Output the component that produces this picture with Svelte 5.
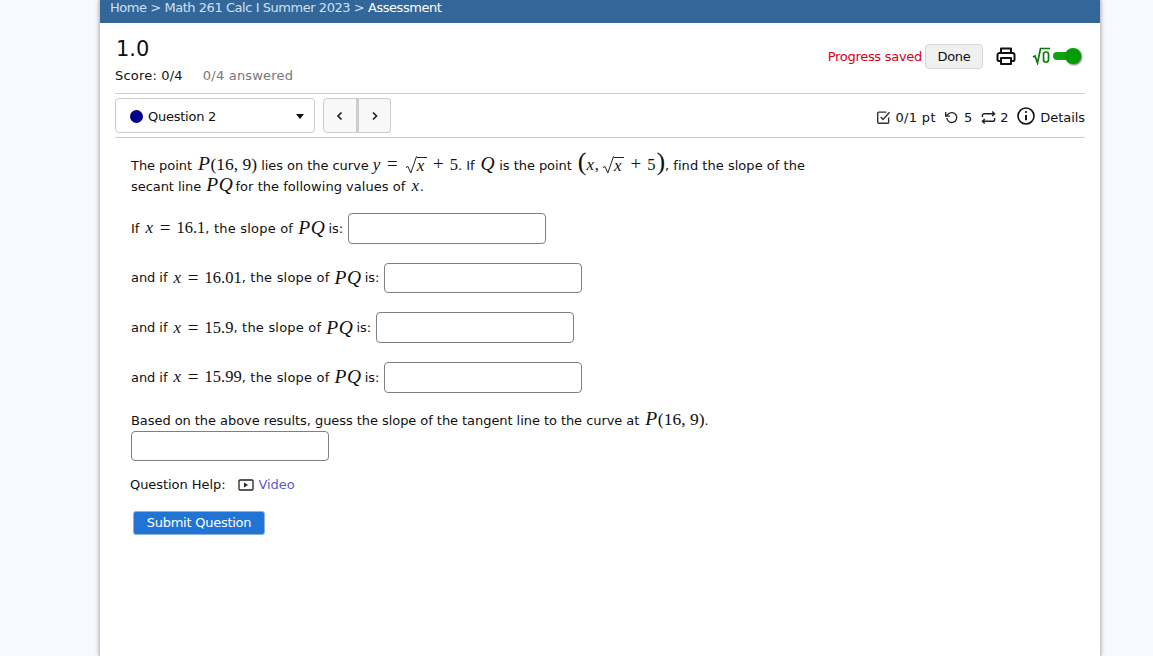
<script>
  const rows = [
    { lead: 'and if', val: '16.01' },
    { lead: 'and if', val: '15.9' },
    { lead: 'and if', val: '15.99' }
  ];
</script>

{#snippet sqrtx()}<span class="sqrt"><svg class="rad" viewBox="0 0 12 18" width="12" height="18" fill="none" stroke="#222"><path d="M1 11.500l2-1 2.800 6.500L11.500 .500h.5" stroke-width="1"/></svg><span class="vinc"><span class="mi">x</span></span></span>{/snippet}

<div class="page">
  <div class="card">
    <nav class="crumbs">Home &gt; Math 261 Calc I Summer 2023 &gt; <span class="cur">Assessment</span></nav>
    <div class="body">
      <header class="top">
        <div>
          <h1>1.0</h1>
          <div class="score"><span>Score: 0/4</span><span class="ans">0/4 answered</span></div>
        </div>
        <div class="tools">
          <span class="saved">Progress saved</span>
          <button class="done">Done</button>
          <svg class="print" viewBox="0 0 20 20" width="20" height="20" fill="none" stroke="#111" stroke-width="2" stroke-linejoin="round"><path d="M5 7V2.500h10V7"/><path d="M5 15H3a1.500 1.500 0 0 1-1.500-1.500V9A2 2 0 0 1 3.500 7h13a2 2 0 0 1 2 2v4.500A1.500 1.500 0 0 1 17 15h-2"/><rect x="5" y="12" width="10" height="6"/></svg>
          <span class="mathtoggle"><svg viewBox="0 0 19 18" width="19" height="18" fill="none" stroke="#0a7a0a" stroke-width="1.700"><path d="M1 10l2-1 2.500 7L8.500 1.500H18"/><rect x="11.500" y="5" width="5" height="10" rx="2.300"/></svg>
            <span class="switch"><span class="knob"></span></span></span>
        </div>
      </header>
      <div class="qbar">
        <div class="left">
          <div class="select"><span class="dot"></span><span class="qname">Question 2</span><span class="caret"></span></div>
          <div class="pager">
            <button aria-label="Previous"><svg viewBox="0 0 10 10" width="10" height="10" fill="none" stroke="#222" stroke-width="1.700"><path d="M6.500 1.500L3 5l3.500 3.500"/></svg></button>
            <button aria-label="Next"><svg viewBox="0 0 10 10" width="10" height="10" fill="none" stroke="#222" stroke-width="1.700"><path d="M3 1.500L6.500 5 3 8.500"/></svg></button>
          </div>
        </div>
        <div class="meta">
          <svg viewBox="0 0 16 16" width="15" height="15" fill="none" stroke="#333" stroke-width="1.500"><path d="M13.500 8v5a1.200 1.200 0 0 1-1.200 1.200H3A1.200 1.200 0 0 1 1.800 13V3.500A1.200 1.200 0 0 1 3 2.300h8"/><path d="M5 7.500l2.500 2.500L14.500 2.500"/></svg>
          <span class="m1">0/1 pt</span>
          <svg viewBox="0 0 16 16" width="15" height="15" fill="none" stroke="#222" stroke-width="1.400"><path d="M3 8.500a5.300 5.300 0 1 0 1.500-4.200L2 6.300"/><path d="M1.800 2v4.500h4.500"/></svg>
          <span class="m2">5</span>
          <svg viewBox="0 0 16 16" width="15" height="15" fill="none" stroke="#222" stroke-width="1.500"><path d="M1.500 7.500V6a2 2 0 0 1 2-2h11M12 1.500L14.500 4 12 6.500"/><path d="M14.500 8.500V10a2 2 0 0 1-2 2h-11M4 9.500L1.500 12 4 14.500"/></svg>
          <span class="m3">2</span>
          <svg class="info" viewBox="0 0 18 18" width="18" height="18" fill="none" stroke="#111" stroke-width="1.600"><circle cx="9" cy="9" r="8"/><path d="M9 8v5.200" stroke-width="2"/><circle cx="9" cy="5" r="1.100" fill="#111" stroke="none"/></svg>
          <span class="details">Details</span>
        </div>
      </div>

      <section class="question">
        <p class="intro">The point <span class="mi big">P</span><span class="mn big">(16, 9)</span> lies on the curve <span class="mi">y</span><span class="op">=</span>{@render sqrtx()}<span class="op">+</span><span class="mn">5</span>. If <span class="mi big">Q</span> is the point <span class="paren open">(</span><span class="mi">x</span><span class="mn cm">,</span> {@render sqrtx()}<span class="op">+</span><span class="mn">5</span><span class="paren close">)</span><span class="tail2">, find the slope of the</span><br />secant line <span class="mi big pq2">PQ</span> <span class="tail2">for the following values of</span> <span class="mi lone">x</span>.</p>

        <div class="row r0">If <span class="mi lone">x</span><span class="op">=</span><span class="mn">16.1</span><span class="tail">, the slope of </span><span class="mi big pq">PQ</span> is: <input aria-label="slope 1" /></div>
        {#each rows as r}
          <div class="row">{r.lead} <span class="mi lone">x</span><span class="op">=</span><span class="mn">{r.val}</span><span class="tail">, the slope of </span><span class="mi big pq">PQ</span> is: <input aria-label="slope" /></div>
        {/each}

        <p class="guess">Based on the above results, guess the slope of the tangent line to the curve at <span class="mi big">P</span><span class="mn big">(16, 9)</span>.</p>
        <input class="last" aria-label="tangent slope" />

        <div class="help">
          <span>Question Help:</span>
          <svg viewBox="0 0 16 12" width="16" height="12" fill="none" stroke="#222" stroke-width="1.300"><rect x="1" y="1" width="14" height="10" rx="1"/><path d="M6 3.500l4 2.500-4 2.500z" fill="#222" stroke="none"/></svg>
          <a href="#video">Video</a>
        </div>
        <button class="submit">Submit Question</button>
      </section>
    </div>
  </div>
</div>

<style>
  :global(body) { margin: 0; background: #f8f8ff; }
  .page {
    height: 656px;
    overflow: hidden;
    font-family: "DejaVu Sans", Tahoma, sans-serif;
    font-size: 13px;
    letter-spacing: -0.06px;
    color: #111;
  }
  .card {
    width: 1000px;
    margin-left: 100px;
    height: 656px;
    background: #fff;
    box-shadow: 0 0 4px 1px #a8a8a8;
  }
  .crumbs {
    height: 23px;
    box-sizing: border-box;
    padding-left: 10px;
    background: #336699;
    color: #cfe0f2;
    line-height: 15px;
    letter-spacing: -0.45px;
  }
  .cur { color: #fff; }
  .body { padding: 0 15px; }
  .top {
    height: 70px;
    display: flex;
    justify-content: space-between;
    border-bottom: 1px solid #ccc;
  }
  h1 {
    margin: 13px 0 0 1px;
    font-size: 21px;
    font-weight: 400;
    line-height: 26px;
    letter-spacing: 0;
  }
  .score { margin-top: 5px; line-height: 18px; display: flex; gap: 20px; letter-spacing: 0.2px; }
  .ans { color: #777; }
  .tools { display: flex; align-items: center; height: 26px; margin-top: 20px; }
  .saved { color: #d4001c; margin-right: 3px; letter-spacing: -0.28px; }
  .done {
    width: 58px;
    height: 25px;
    padding: 0;
    font: inherit;
    letter-spacing: -0.35px;
    color: #111;
    background: #f0f0f0;
    border: 1px solid #d6d6d6;
    border-radius: 4px;
  }
  .print { margin-left: 13px; }
  .mathtoggle { display: flex; align-items: center; margin-left: 16px; margin-right: 4px; }
  .switch {
    position: relative;
    display: block;
    width: 28px;
    height: 8px;
    margin-left: 2px;
    background: #0fa30f;
    border-radius: 4px;
  }
  .knob {
    position: absolute;
    right: 0;
    top: -4px;
    width: 16px;
    height: 16px;
    border-radius: 50%;
    background: #049c04;
    box-shadow: 1px 1px 2px #666;
  }
  .qbar {
    height: 43px;
    display: flex;
    align-items: center;
    justify-content: space-between;
    border-bottom: 1px solid #ccc;
  }
  .left { display: flex; gap: 8px; }
  .select {
    width: 200px;
    height: 35px;
    box-sizing: border-box;
    display: flex;
    align-items: center;
    padding: 1px 10px 0 14px;
    letter-spacing: -0.25px;
    border: 1px solid #ccc;
    border-radius: 4px;
  }
  .dot { width: 13px; height: 13px; border-radius: 50%; background: #00008b; margin-right: 5px; }
  .qname { flex: 1; }
  .caret {
    width: 0;
    height: 0;
    border-left: 4px solid transparent;
    border-right: 4px solid transparent;
    border-top: 5px solid #111;
  }
  .pager { display: flex; }
  .pager button {
    width: 34px;
    height: 35px;
    padding: 0;
    display: flex;
    align-items: center;
    justify-content: center;
    background: #f8f8f8;
    border: 1px solid #ccc;
  }
  .pager button:first-child { border-radius: 4px 0 0 4px; }
  .pager button:last-child { border-left: 2px solid #ccc; border-radius: 0 4px 4px 0; }
  .meta { display: flex; align-items: center; padding-top: 4px; }
  .m1 { margin: 0 8px 0 4px; letter-spacing: .35px; }
  .m2 { margin: 0 9px 0 5px; }
  .m3 { margin: 0 9px 0 4px; }
  .info { margin: -4px 5px 0 0; }
  .question { padding: 16px 16px 0; }
  p { margin: 0; }
  .intro { line-height: 21px; }
  .mi { font-family: "Liberation Serif", serif; font-style: italic; font-size: 17px; letter-spacing: 0.8px; line-height: 16px; }
  .mi.big { font-size: 19.500px; line-height: 16px; letter-spacing: 0.6px; margin-left: 2px; }
  .mi.pq { margin-left: 5px; margin-right: -1px; }
  .mi.pq2 { margin-left: 1px; margin-right: -2px; }
  .lone { margin-left: 2px; }
  .mn { font-family: "Liberation Serif", serif; font-size: 16.500px; letter-spacing: 0; line-height: 16px; }
  .mn.big { font-size: 17.500px; }
  .cm { margin-right: -2px; }
  .op { font-family: "Liberation Serif", serif; font-size: 19px; margin: 0 6px; letter-spacing: 0; line-height: 16px; }
  .paren { font-family: "Liberation Serif", serif; font-size: 26px; line-height: 16px; letter-spacing: 0; font-weight: 400; }
  .open { margin-left: 2px; }
  .close { margin-left: 1px; }
  .tail { letter-spacing: 0.2px; }
  .tail2 { letter-spacing: 0.03px; }
  .sqrt { display: inline-flex; align-items: flex-end; line-height: 15px; vertical-align: -4px; margin-left: 1px; }
  .rad { display: block; }
  .vinc { border-top: 1px solid #222; height: 17px; line-height: 17px; box-sizing: border-box; padding-right: 2px; }
  .row { height: 30.670px; display: flex; align-items: center; white-space: pre; margin-top: 19px; }
  .r0 { margin-top: 16px; }
  input {
    width: 198px;
    height: 30.670px;
    box-sizing: border-box;
    border: 1px solid #808080;
    border-radius: 4px;
    background: #fff;
    margin-left: 1px;
    padding: 0;
  }
  .guess { margin-top: 17px; line-height: 21px; }
  .last { display: block; margin: 0; height: 30px; }
  .help { display: flex; align-items: center; margin: 15px 0 0 -1px; height: 18px; }
  .help svg { margin-left: 13px; margin-right: 4px; }
  a { color: #5a5ac8; text-decoration: none; }
  .submit {
    display: block;
    width: 132px;
    height: 24px;
    margin: 17px 0 0 2px;
    padding: 0;
    font: inherit;
    letter-spacing: -0.25px;
    color: #fff;
    background: #1f74d4;
    border: 1px solid #8fb2da;
    border-radius: 3px;
  }
</style>
